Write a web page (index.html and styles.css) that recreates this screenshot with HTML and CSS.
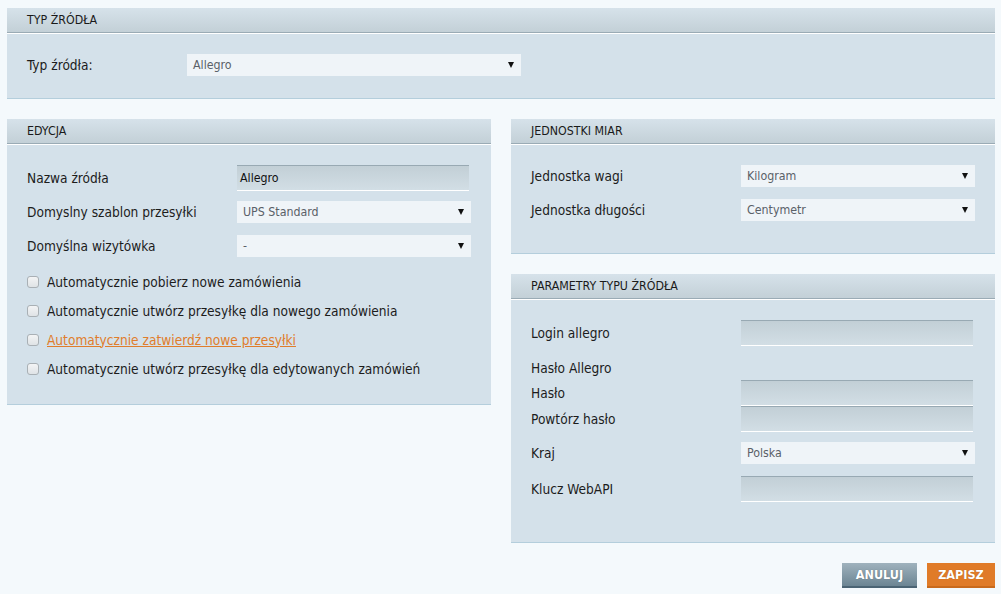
FILE: index.html
```html
<!DOCTYPE html>
<html lang="pl">
<head>
<meta charset="utf-8">
<title>Źródło zamówień</title>
<link rel="stylesheet" href="styles.css">
</head>
<body>
<div class="page">
  <section class="panel panel-top">
    <div class="panel-head">TYP ŹRÓDŁA</div>
    <div class="panel-body">
      <div class="row row-top">
        <span class="label">Typ źródła:</span>
        <div class="select select-wide"><span>Allegro</span><i class="arrow"></i></div>
      </div>
    </div>
  </section>

  <div class="columns">
    <section class="panel panel-edit">
      <div class="panel-head">EDYCJA</div>
      <div class="panel-body">
        <div class="row row-input">
          <span class="label">Nazwa źródła</span>
          <div class="input"><span class="value">Allegro</span></div>
        </div>
        <div class="row row-select">
          <span class="label">Domyslny szablon przesyłki</span>
          <div class="select"><span>UPS Standard</span><i class="arrow"></i></div>
        </div>
        <div class="row row-select">
          <span class="label">Domyślna wizytówka</span>
          <div class="select"><span>-</span><i class="arrow"></i></div>
        </div>
        <ul class="checks">
          <li><span class="box"></span><span>Automatycznie pobierz nowe zamówienia</span></li>
          <li><span class="box"></span><span>Automatycznie utwórz przesyłkę dla nowego zamówienia</span></li>
          <li><span class="box"></span><a class="link" href="#">Automatycznie zatwierdź nowe przesyłki</a></li>
          <li><span class="box"></span><span>Automatycznie utwórz przesyłkę dla edytowanych zamówień</span></li>
        </ul>
      </div>
    </section>

    <div class="col-right">
      <section class="panel panel-units">
        <div class="panel-head">JEDNOSTKI MIAR</div>
        <div class="panel-body">
          <div class="row row-select">
            <span class="label">Jednostka wagi</span>
            <div class="select"><span>Kilogram</span><i class="arrow"></i></div>
          </div>
          <div class="row row-select">
            <span class="label">Jednostka długości</span>
            <div class="select"><span>Centymetr</span><i class="arrow"></i></div>
          </div>
        </div>
      </section>

      <section class="panel panel-params">
        <div class="panel-head">PARAMETRY TYPU ŹRÓDŁA</div>
        <div class="panel-body">
          <div class="row row-input">
            <span class="label">Login allegro</span>
            <div class="input input-short"></div>
          </div>
          <div class="row row-text">
            <span class="label">Hasło Allegro</span>
          </div>
          <div class="row row-input row-tight">
            <span class="label">Hasło</span>
            <div class="input input-short"></div>
          </div>
          <div class="row row-input">
            <span class="label">Powtórz hasło</span>
            <div class="input input-short"></div>
          </div>
          <div class="row row-select">
            <span class="label">Kraj</span>
            <div class="select"><span>Polska</span><i class="arrow"></i></div>
          </div>
          <div class="row row-input">
            <span class="label">Klucz WebAPI</span>
            <div class="input input-short"></div>
          </div>
        </div>
      </section>

      <div class="actions">
        <button class="btn btn-cancel" type="button">ANULUJ</button>
        <button class="btn btn-save" type="button">ZAPISZ</button>
      </div>
    </div>
  </div>
</div>
</body>
</html>
```

FILE: styles.css
```css
* { box-sizing: border-box; }

html, body {
  margin: 0;
  padding: 0;
  background: #f4f9fc;
}

body {
  font-family: "DejaVu Sans Condensed", "DejaVu Sans", sans-serif;
  font-size: 13.6px;
  color: #1c1c1c;
}

.page {
  width: 988px;
  margin-left: 7px;
  padding-top: 8px;
}

.panel {
  background: #d4e1ea;
  border-bottom: 1px solid #b4cedc;
}

.panel-head {
  height: 25px;
  padding: 0 20px;
  font-size: 12.3px;
  line-height: 24px;
  color: #1a1a1a;
  background: linear-gradient(#d6e2ea, #c3d0d7);
  border-bottom: 1px solid #9aabb5;
  box-shadow: 0 1px 0 #ffffff;
  margin-bottom: 1px;
}

.panel-body {
  padding: 20px 20px 0;
}

.panel-top .panel-body {
  height: 64px;
}

.row {
  display: flex;
  align-items: center;
}

.label {
  width: 210px;
  flex: none;
}

.row-top .label { width: 160px; }

.select {
  position: relative;
  height: 22px;
  width: 234px;
  background: #eff4f8;
  color: #5a6168;
  font-size: 12.3px;
  line-height: 22px;
  padding-left: 6px;
}

.select-wide { width: 334px; padding-left: 6px; }

.arrow {
  position: absolute;
  right: 7px;
  top: 8px;
  width: 0;
  height: 0;
  border-left: 3.5px solid transparent;
  border-right: 3.5px solid transparent;
  border-top: 6px solid #111;
}

.input {
  height: 26px;
  width: 232px;
  border-top: 1px solid #98a9b3;
  border-bottom: 1px solid #ffffff;
  background: linear-gradient(#c2cfd6, #d2dee5);
  font-size: 12.3px;
  line-height: 24px;
  padding-left: 3px;
  color: #111;
}

.row-input { height: 26px; }
.row-select { height: 22px; }

.row-input + .row { margin-top: 10px; }
.row-select + .row { margin-top: 12px; }

.checks {
  list-style: none;
  margin: 10px 0 0;
  padding: 0 0 21px;
}

.checks li {
  height: 29px;
  display: flex;
  align-items: center;
  gap: 8px;
}

.box {
  width: 12px;
  height: 12px;
  flex: none;
  border: 1px solid #a9b0b5;
  border-radius: 3px;
  background: linear-gradient(#f3f4f5, #dfe3e6);
}

.link {
  color: #e07d2c;
  text-decoration: underline;
}

.columns {
  display: grid;
  grid-template-columns: 484px 484px;
  column-gap: 20px;
  margin-top: 20px;
  align-items: start;
}

.panel-units .panel-body { padding-bottom: 32px; }

.panel-params { margin-top: 20px; }
.panel-params .panel-body { padding-bottom: 40px; }

.panel-params .row-input + .row-text { margin-top: 14px; }
.row-text { height: 16px; }
.row-text + .row { margin-top: 4px; }
.row-input.row-tight + .row-input { margin-top: 0; }

.actions {
  display: flex;
  justify-content: flex-end;
  gap: 10px;
  margin-top: 20px;
}

.btn {
  height: 25px;
  border: 0;
  border-bottom: 2px solid;
  font-family: "DejaVu Sans Condensed", "DejaVu Sans", sans-serif;
  font-size: 12.5px;
  font-weight: bold;
  color: #fff;
  padding: 0;
  text-shadow: 0 0 1px rgba(0,0,0,0.3);
}

.btn-cancel {
  width: 75px;
  background: linear-gradient(#9fb2bd, #6c8593);
  border-bottom-color: #4b6474;
}

.btn-save {
  width: 68px;
  background: #e07b28;
  border-bottom-color: #c96a1c;
}
```
